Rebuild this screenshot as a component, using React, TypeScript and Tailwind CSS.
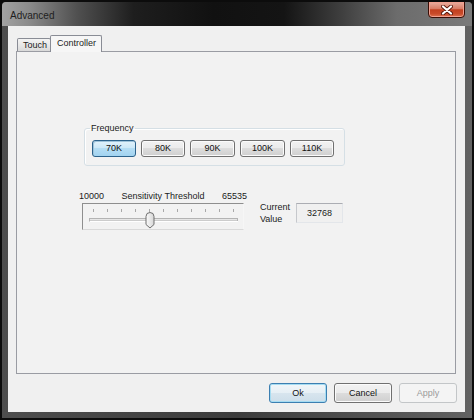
import type { ReactNode } from "react";

type Variant = "normal" | "pressed" | "default" | "disabled";

const variants: Record<Variant, string> = {
  normal:
    "border-[#707070] bg-[linear-gradient(180deg,#f2f2f2_0%,#ebebeb_49%,#dddddd_50%,#cfcfcf_100%)] shadow-[inset_0_0_0_1px_#fbfbfb] text-[#111]",
  pressed:
    "border-[#2c628b] bg-[linear-gradient(180deg,#e2f2fb_0%,#cbe8f8_49%,#b4ddf4_50%,#a2d3f0_100%)] shadow-[inset_1px_1px_0_#9ec3da] text-[#111]",
  default:
    "border-[#3c7fb1] bg-[linear-gradient(180deg,#f1f6f9_0%,#e6eff5_49%,#d8e5ee_50%,#cddeea_100%)] shadow-[inset_0_0_0_1px_#a6dcf2] text-[#111]",
  disabled: "border-[#c3c6c8] bg-[#f4f4f4] text-[#9a9a9a]",
};

function WinButton({
  children,
  variant = "normal",
  className = "",
}: {
  children: ReactNode;
  variant?: Variant;
  className?: string;
}) {
  return (
    <button
      className={`flex items-center justify-center rounded-[3px] border ${variants[variant]} ${className}`}
    >
      {children}
    </button>
  );
}

function Slider() {
  const ticks = Array.from({ length: 11 }, (_, i) => 10 + i * 14);
  return (
    <svg width="160" height="25" viewBox="0 0 160 25">
      <defs>
        <linearGradient id="thumb" x1="0" y1="0" x2="1" y2="0">
          <stop offset="0" stopColor="#fafafa" />
          <stop offset="1" stopColor="#d6d6d6" />
        </linearGradient>
      </defs>
      {ticks.map((x) => (
        <line key={x} x1={x + 0.5} y1="5" x2={x + 0.5} y2="8" stroke="#a8a8a8" strokeWidth="1" />
      ))}
      <rect x="6.5" y="14.5" width="148" height="2.5" fill="#e6e6e6" stroke="#b3b3b3" strokeWidth="1" />
      <line x1="7" y1="17.5" x2="155" y2="17.5" stroke="#ffffff" />
      <path
        d="M63 12.5 Q63 8.5 67 8.5 Q71 8.5 71 12.5 L71 20.5 L67 24 L63 20.5 Z"
        fill="url(#thumb)"
        stroke="#6f6f6f"
        strokeWidth="1"
      />
    </svg>
  );
}

export default function App() {
  return (
    <div className="w-[474px] h-[420px] bg-[#0b0b0b] font-['Liberation_Sans',Arial,sans-serif] text-[9px] leading-[11px] text-[#1b1b1b] select-none">
      <div className="h-full flex flex-col rounded-t-[6px] border-2 border-[#0c0c0c] bg-[linear-gradient(90deg,#4e4e4e_0%,#3c3c3c_50%,#626262_100%)] overflow-hidden">
        {/* Title bar */}
        <div className="h-[24px] shrink-0 flex items-start justify-between pl-[8px] pr-[7px] bg-[linear-gradient(90deg,#a2a2a2_0%,#8a8a8a_6%,#505050_16%,#1e1e1e_28%,#111111_45%,#141414_60%,#3e3e3e_72%,#6c6c6c_84%,#7a7a7a_100%)]">
          <span className="mt-[8px] text-[10px] leading-[11px] text-[#1e1e1e]">Advanced</span>
          <div className="w-[37px] h-[17px] -mt-[1px] rounded-b-[4px] border border-[#3a0e06] bg-[linear-gradient(180deg,#eab0a2_0%,#d97c65_45%,#c2401f_52%,#c84a2a_78%,#e0734f_100%)] shadow-[inset_0_0_0_1px_#f0a090] flex items-center justify-center">
            <svg width="12" height="10" viewBox="0 0 12 10">
              <path d="M2 1.5 L10 8.5 M10 1.5 L2 8.5" stroke="#5a1a0e" strokeWidth="4" strokeLinecap="round" />
              <path d="M2 1.5 L10 8.5 M10 1.5 L2 8.5" stroke="#ffffff" strokeWidth="2.2" strokeLinecap="round" />
            </svg>
          </div>
        </div>

        {/* Client area */}
        <div className="flex-1 ml-[6px] mr-[7px] mb-[6px] bg-[#f0f0f0] flex flex-col">
          {/* Tabs */}
          <div className="ml-[8px] mt-[9px] h-[16px] flex items-end">
            <div className="ml-[1px] h-[13px] w-[34px] border border-b-0 border-[#898c95] rounded-t-[2px] bg-[linear-gradient(180deg,#f3f3f3_0%,#e8e8e8_50%,#d9d9d9_100%)] pl-[5px] pt-[1px]">
              Touch
            </div>
            <div className="relative z-10 -ml-[1px] -mb-[1px] h-[17px] w-[52px] border border-b-0 border-[#898c95] rounded-t-[2px] bg-[#f6f6f6] pl-[6px] pt-[2px]">
              Controller
            </div>
          </div>

          {/* Tab panel */}
          <div className="ml-[8px] w-[440px] h-[323px] border border-[#9a9ca3] bg-[#f2f2f2] flex flex-col">
            <fieldset className="ml-[67px] mt-[71px] w-[261px] border border-[#d5dfe5] rounded-[3px] shadow-[inset_1px_1px_0_#ffffff]">
              <legend className="ml-[5px] px-[1px] text-[#1b1b1b]">Frequency</legend>
              <div className="ml-[7px] mt-[6px] mb-[8px] flex gap-[5px] h-[17px]">
                <WinButton variant="pressed" className="w-[44px]">70K</WinButton>
                <WinButton className="w-[44px]">80K</WinButton>
                <WinButton className="w-[45px]">90K</WinButton>
                <WinButton className="w-[45px]">100K</WinButton>
                <WinButton className="w-[44px]">110K</WinButton>
              </div>
            </fieldset>

            <div className="ml-[62px] mt-[25px] flex">
              <div className="w-[168px] flex flex-col">
                <div className="h-[11px] flex justify-between">
                  <span>10000</span>
                  <span>Sensitivity Threshold</span>
                  <span>65535</span>
                </div>
                <div className="ml-[3px] mt-[1px] w-[162px] h-[27px] border border-t-[#8e8e8e] border-l-[#8e8e8e] border-r-[#f6f6f6] border-b-[#d9d9d9]">
                  <Slider />
                </div>
              </div>

              <div className="ml-[13px] mt-[10px] flex">
                <div className="w-[36px] leading-[12px]">
                  <div>Current</div>
                  <div>Value</div>
                </div>
                <div className="mt-[2px] w-[47px] h-[20px] border border-t-[#abadb3] border-l-[#c6c8cc] border-r-[#e3e6ea] border-b-[#e3e6ea] bg-[#f0f0f0] flex items-center justify-center">
                  32768
                </div>
              </div>
            </div>
          </div>

          {/* Dialog buttons */}
          <div className="mt-[9px] pr-[8px] flex justify-end gap-[7px] h-[20px]">
            <WinButton variant="default" className="w-[58px]">Ok</WinButton>
            <WinButton className="w-[58px]">Cancel</WinButton>
            <WinButton variant="disabled" className="w-[58px]">Apply</WinButton>
          </div>
        </div>
      </div>
    </div>
  );
}
